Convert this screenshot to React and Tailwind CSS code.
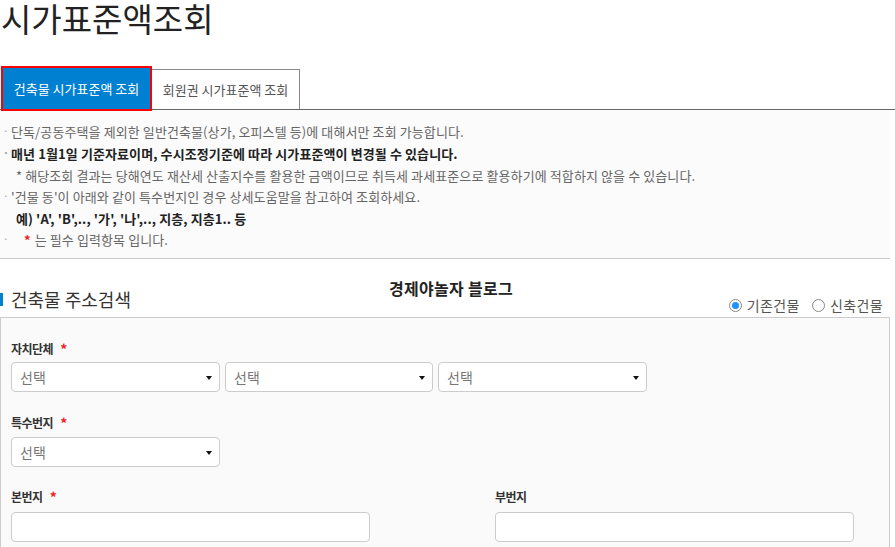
import React from "react";

const KR = { fontFamily: '"Noto Sans CJK KR", "Noto Sans", sans-serif' };

function Select({ w }) {
  return (
    <div className={`relative h-[30px] ${w} bg-white border border-[#cccccc] rounded-[4px] flex items-center pl-[8px]`}>
      <span className="text-[14px] text-[#777777] leading-none">선택</span>
      <svg className="absolute right-[7px] top-[13px]" width="6" height="4" viewBox="0 0 6 4">
        <path d="M0 0 L6 0 L3 4 Z" fill="#111111" />
      </svg>
    </div>
  );
}

function Star() {
  return <span className="text-[#ee2222] text-[14px] ml-[7px] font-bold">*</span>;
}

function Bullet() {
  return <span className="inline-block w-[8px] text-[#999999] relative -top-[2px] text-[10px]">·</span>;
}

export default function App() {
  return (
    <div className="w-[895px] h-[547px] overflow-hidden bg-white text-[#333333]" style={KR}>
      <h1 className="pl-[1px] text-[33px] leading-[36px] text-[#222222] font-normal">시가표준액조회</h1>

      <div className="mt-[31px] h-[43px] flex items-end border-b border-[#666666]">
        <div className="ml-[1px] -mb-[2px] h-[45px] w-[151px] bg-[#0080d0] border-2 border-[#ff0000] flex items-center justify-center">
          <span className="text-white text-[13px]">건축물 시가표준액 조회</span>
        </div>
        <div className="h-[40px] w-[148px] border-t border-r border-[#888888] bg-white flex items-center justify-center">
          <span className="text-[#555555] text-[13px]">회원권 시가표준액 조회</span>
        </div>
      </div>

      <div className="w-[890px] bg-[#fbfbfb] border-b border-[#cccccc] pt-[11px] pb-[7px] text-[13px] leading-[21px] tracking-[0.1px]">
        <div className="pl-[3px] text-[#666666]"><Bullet />단독/공동주택을 제외한 일반건축물(상가, 오피스텔 등)에 대해서만 조회 가능합니다.</div>
        <div className="pl-[3px] text-[#222222] font-bold"><Bullet />매년 1월1일 기준자료이며, 수시조정기준에 따라 시가표준액이 변경될 수 있습니다.</div>
        <div className="pl-[16px] text-[#666666]">* 해당조회 결과는 당해연도 재산세 산출지수를 활용한 금액이므로 취득세 과세표준으로 활용하기에 적합하지 않을 수 있습니다.</div>
        <div className="pl-[3px] text-[#666666]"><Bullet />'건물 동'이 아래와 같이 특수번지인 경우 상세도움말을 참고하여 조회하세요.</div>
        <div className="pl-[16px] text-[#222222] font-bold">예) 'A', 'B',.., '가', '나',.., 지층, 지층1.. 등</div>
        <div className="pl-[3px] text-[#666666]"><Bullet /><span className="text-[#ee2222] ml-[13px] mr-[4px] font-bold">*</span>는 필수 입력항목 입니다.</div>
      </div>

      <div className="relative w-[890px] h-[58px] flex items-end justify-between">
        <span className="absolute left-[389px] top-[19px] text-[16px] font-bold text-[#222222] tracking-[0.3px] leading-[20px]">경제야놀자 블로그</span>
        <div className="flex items-center mb-[6px] h-[24px]">
          <div className="w-[3px] h-[13px] bg-[#0080d0]" />
          <span className="ml-[8px] text-[18px] text-[#333333] leading-[24px]">건축물 주소검색</span>
        </div>
        <div className="flex items-center mb-[2px] mr-[7px] text-[14px] text-[#555555] leading-[20px]">
          <span className="w-[13px] h-[13px] rounded-full border border-[#888888] bg-white flex items-center justify-center">
            <span className="w-[7px] h-[7px] rounded-full bg-[#1e90ff]" />
          </span>
          <span className="ml-[5px] tracking-[0.4px]">기존건물</span>
          <span className="ml-[12px] w-[13px] h-[13px] rounded-full border border-[#888888] bg-white" />
          <span className="ml-[5px] tracking-[0.4px]">신축건물</span>
        </div>
      </div>

      <div className="w-[890px] h-[260px] border border-[#cccccc] bg-[#fafafa] pl-[10px] pt-[22px]">
        <div className="h-[18px] flex items-center text-[12px] font-bold text-[#333333] tracking-[-0.5px]">자치단체<Star /></div>
        <div className="mt-[4px] flex gap-[5px]">
          <Select w="w-[209px]" />
          <Select w="w-[208px]" />
          <Select w="w-[209px]" />
        </div>

        <div className="mt-[22px] h-[18px] flex items-center text-[12px] font-bold text-[#333333] tracking-[-0.5px]">특수번지<Star /></div>
        <div className="mt-[5px]">
          <Select w="w-[209px]" />
        </div>

        <div className="mt-[21px] grid grid-cols-[484px_1fr]">
          <div>
            <div className="h-[18px] flex items-center text-[12px] font-bold text-[#333333] tracking-[-0.5px]">본번지<Star /></div>
            <div className="mt-[6px] h-[30px] w-[359px] bg-white border border-[#cccccc] rounded-[4px]" />
          </div>
          <div>
            <div className="h-[18px] flex items-center text-[12px] font-bold text-[#333333] tracking-[-0.5px]">부번지</div>
            <div className="mt-[6px] h-[30px] w-[359px] bg-white border border-[#cccccc] rounded-[4px]" />
          </div>
        </div>
      </div>
    </div>
  );
}
